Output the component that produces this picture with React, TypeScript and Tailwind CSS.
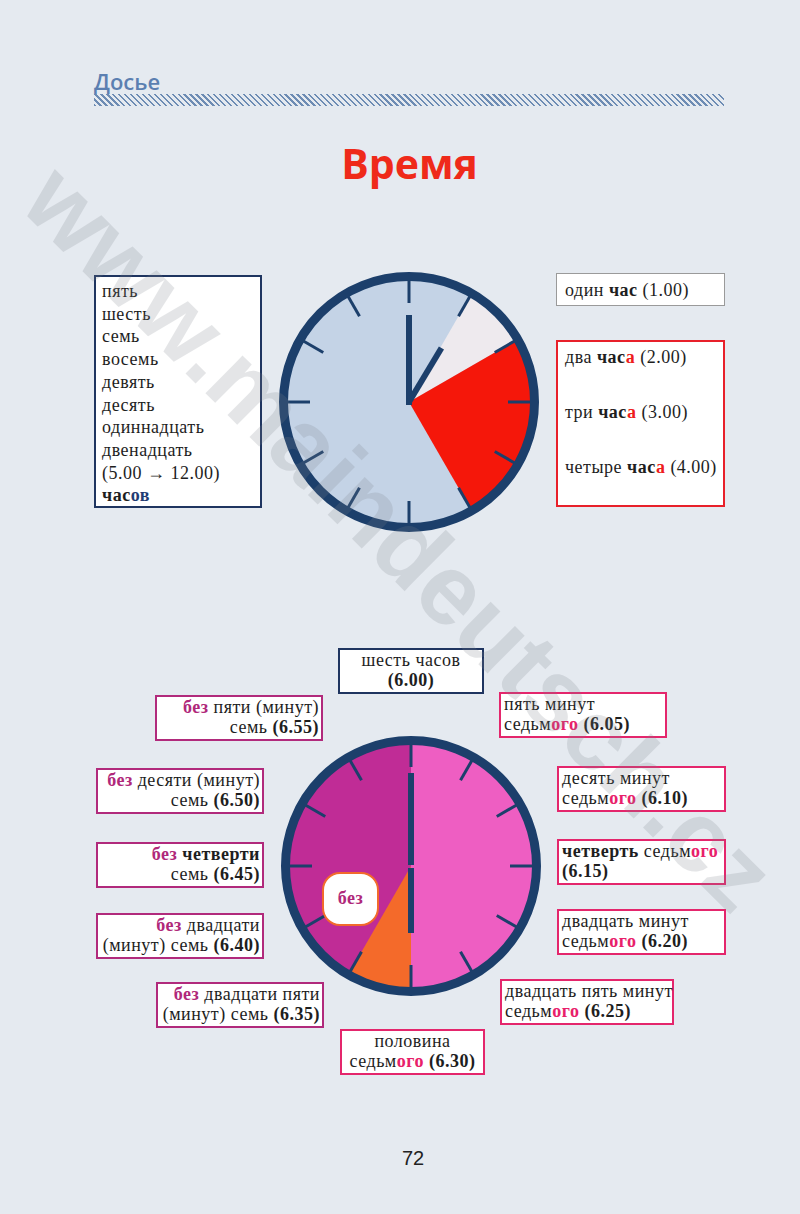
const NAVY = "#1c3f6b";

type Wedge = [number, number, string];

const pt = (a: number, r: number) => {
  const rad = (a * Math.PI) / 180;
  return [130 + r * Math.sin(rad), 130 - r * Math.cos(rad)];
};

const wedgePath = (a1: number, a2: number, r: number) => {
  const [x1, y1] = pt(a1, r);
  const [x2, y2] = pt(a2, r);
  const large = a2 - a1 > 180 ? 1 : 0;
  return `M130 130 L${x1} ${y1} A${r} ${r} 0 ${large} 1 ${x2} ${y2} Z`;
};

interface ClockProps {
  face: string;
  wedges: Wedge[];
  hands: { a: number; from: number; to: number }[];
}

const Clock = ({ face, wedges, hands }: ClockProps) => (
  <svg width="260" height="260" viewBox="0 0 260 260" className="block">
    <circle cx="130" cy="130" r="124" fill={face} />
    {wedges.map(([a1, a2, c], i) => (
      <path key={i} d={wedgePath(a1, a2, 124)} fill={c} />
    ))}
    {Array.from({ length: 12 }).map((_, i) => {
      const [x1, y1] = pt(i * 30, 99);
      const [x2, y2] = pt(i * 30, 124);
      return <line key={i} x1={x1} y1={y1} x2={x2} y2={y2} stroke={NAVY} strokeWidth="3" />;
    })}
    {hands.map((h, i) => {
      const [x1, y1] = pt(h.a, h.from);
      const [x2, y2] = pt(h.a, h.to);
      return <line key={i} x1={x1} y1={y1} x2={x2} y2={y2} stroke={NAVY} strokeWidth="6" />;
    })}
    <circle cx="130" cy="130" r="125.5" fill="none" stroke={NAVY} strokeWidth="9" />
  </svg>
);

// подписи нижнего циферблата
const leftBox = "absolute h-[46px] w-[168px] border-2 border-[#b12a7c] bg-white pr-[2px] text-right leading-[20px]";
const rightBox = "absolute h-[46px] border-2 border-[#e4266c] bg-white pl-[3px] leading-[20px]";

const Bez = () => <b className="text-[#b0287a]">без</b>;
const Ogo = () => <b className="text-[#e8206a]">ого</b>;

const App = () => {
  return (
    <div className="relative h-[1214px] w-[800px] overflow-hidden bg-[#e5eaf0] text-[#1e1e1e]">
      {/* header */}
      <div className="pl-[94px] pt-[67px]">
        <div className="font-['Open_Sans',sans-serif] text-[22px] font-semibold leading-[28px] text-[#5b7fb1]">
          Досье
        </div>
        <div className="-mt-[1px] h-[12px] w-[630px] bg-[repeating-linear-gradient(45deg,#6d8cb4_0px,#6d8cb4_1.6px,transparent_1.6px,transparent_4.2px)]" />
      </div>

      <h1 className="mt-[37px] pl-[19px] text-center font-['Open_Sans',sans-serif] text-[41px] font-bold leading-[41px] text-[#ef2a1a]">
        Время
      </h1>

      {/* часы 1 */}
      <div className="mt-[88px] flex items-start pl-[94px] font-['Liberation_Serif','Times_New_Roman',serif] text-[18px] tracking-[0.5px]">
        <div className="mt-[3px] h-[233px] w-[168px] border-2 border-[#1f3560] bg-white pl-[6px] pt-[3px] leading-[22.7px]">
          <div>пять</div>
          <div>шесть</div>
          <div>семь</div>
          <div>восемь</div>
          <div>девять</div>
          <div>десять</div>
          <div>одиннадцать</div>
          <div>двенадцать</div>
          <div>(5.00 → 12.00)</div>
          <div className="font-bold">
            час<span className="text-[#1f3c73]">ов</span>
          </div>
        </div>

        <div className="ml-[17px]">
          <Clock
            face="#c4d3e6"
            wedges={[
              [30, 60, "#eeeaee"],
              [60, 150, "#f5170a"],
            ]}
            hands={[
              { a: 0, from: -3, to: 87 },
              { a: 31, from: 0, to: 63 },
            ]}
          />
        </div>

        <div className="ml-[17px] flex w-[169px] flex-col">
          <div className="mt-[1px] h-[33px] border border-[#9a9a9a] bg-white pl-[8px] pt-[5px] leading-[22px] whitespace-nowrap">
            один <b>час</b> (1.00)
          </div>
          <div className="mt-[34px] flex h-[167px] flex-col gap-[33px] border-2 border-[#e8202a] bg-white pl-[7px] pt-[4px] leading-[22px] whitespace-nowrap">
            <div>
              два <b>час<span className="text-[#ee1c1c]">а</span></b> (2.00)
            </div>
            <div>
              три <b>час<span className="text-[#ee1c1c]">а</span></b> (3.00)
            </div>
            <div>
              четыре <b>час<span className="text-[#ee1c1c]">а</span></b> (4.00)
            </div>
          </div>
        </div>
      </div>

      {/* часы 2 */}
      <div className="relative mt-[108px] h-[440px] font-['Liberation_Serif','Times_New_Roman',serif] text-[18px] tracking-[0.5px] whitespace-nowrap">
        <div className="pl-[281px] pt-[96px]">
          <div className="relative w-[260px]">
            <Clock
              face="#ee5ec2"
              wedges={[
                [0, 180, "#ee5ec2"],
                [180, 360, "#c02c96"],
                [180, 210, "#f46a2a"],
              ]}
              hands={[
                { a: 0, from: 1, to: 93 },
                { a: 180, from: 2, to: 67 },
              ]}
            />
            <div className="absolute left-[41px] top-[136px] flex h-[54px] w-[57px] items-center justify-center rounded-[18px] border-2 border-[#f26a2c] bg-white pb-[2px] font-bold text-[#b0287a]">
              без
            </div>
          </div>
        </div>

        <div className="absolute left-[338px] top-[8px] h-[46px] w-[146px] border-2 border-[#1f3560] bg-white text-center leading-[20px]">
          <div>шесть часов</div>
          <div className="font-bold">(6.00)</div>
        </div>

        <div className={`${leftBox} left-[155px] top-[55px]`}>
          <div>
            <Bez /> пяти (минут)
          </div>
          <div>
            семь <b>(6.55)</b>
          </div>
        </div>
        <div className={`${leftBox} left-[96px] top-[128px]`}>
          <div>
            <Bez /> десяти (минут)
          </div>
          <div>
            семь <b>(6.50)</b>
          </div>
        </div>
        <div className={`${leftBox} left-[96px] top-[202px]`}>
          <div>
            <Bez /> <b>четверти</b>
          </div>
          <div>
            семь <b>(6.45)</b>
          </div>
        </div>
        <div className={`${leftBox} left-[96px] top-[273px]`}>
          <div>
            <Bez /> двадцати
          </div>
          <div>
            (минут) семь <b>(6.40)</b>
          </div>
        </div>
        <div className={`${leftBox} left-[156px] top-[342px]`}>
          <div>
            <Bez /> двадцати пяти
          </div>
          <div>
            (минут) семь <b>(6.35)</b>
          </div>
        </div>

        <div className={`${rightBox} left-[499px] top-[52px] w-[168px]`}>
          <div>пять минут</div>
          <div>
            седьм<Ogo /> <b>(6.05)</b>
          </div>
        </div>
        <div className={`${rightBox} left-[557px] top-[126px] w-[169px]`}>
          <div>десять минут</div>
          <div>
            седьм<Ogo /> <b>(6.10)</b>
          </div>
        </div>
        <div className={`${rightBox} left-[557px] top-[199px] w-[169px]`}>
          <div>
            <b>четверть</b> седьм<Ogo />
          </div>
          <div className="font-bold">(6.15)</div>
        </div>
        <div className={`${rightBox} left-[557px] top-[269px] w-[169px]`}>
          <div>двадцать минут</div>
          <div>
            седьм<Ogo /> <b>(6.20)</b>
          </div>
        </div>
        <div className={`${rightBox} left-[500px] top-[339px] w-[174px]`}>
          <div>двадцать пять минут</div>
          <div>
            седьм<Ogo /> <b>(6.25)</b>
          </div>
        </div>

        <div className="absolute left-[340px] top-[389px] h-[46px] w-[145px] border-2 border-[#e4266c] bg-white text-center leading-[20px]">
          <div>половина</div>
          <div>
            седьм<Ogo /> <b>(6.30)</b>
          </div>
        </div>
      </div>

      <div className="mt-[68px] pl-[402px] font-['Liberation_Sans',Arial,sans-serif] text-[20px] leading-[20px] text-[#222]">
        72
      </div>

      {/* watermark */}
      <div className="pointer-events-none absolute left-[400px] top-[537px] -translate-x-1/2 -translate-y-1/2 rotate-[44.8deg] whitespace-nowrap font-['Liberation_Sans',Arial,sans-serif] text-[100px] font-bold leading-none text-[#7d838b] opacity-[0.2]">
        www.maindeutsch.cz
      </div>
    </div>
  );
};

export default App;
